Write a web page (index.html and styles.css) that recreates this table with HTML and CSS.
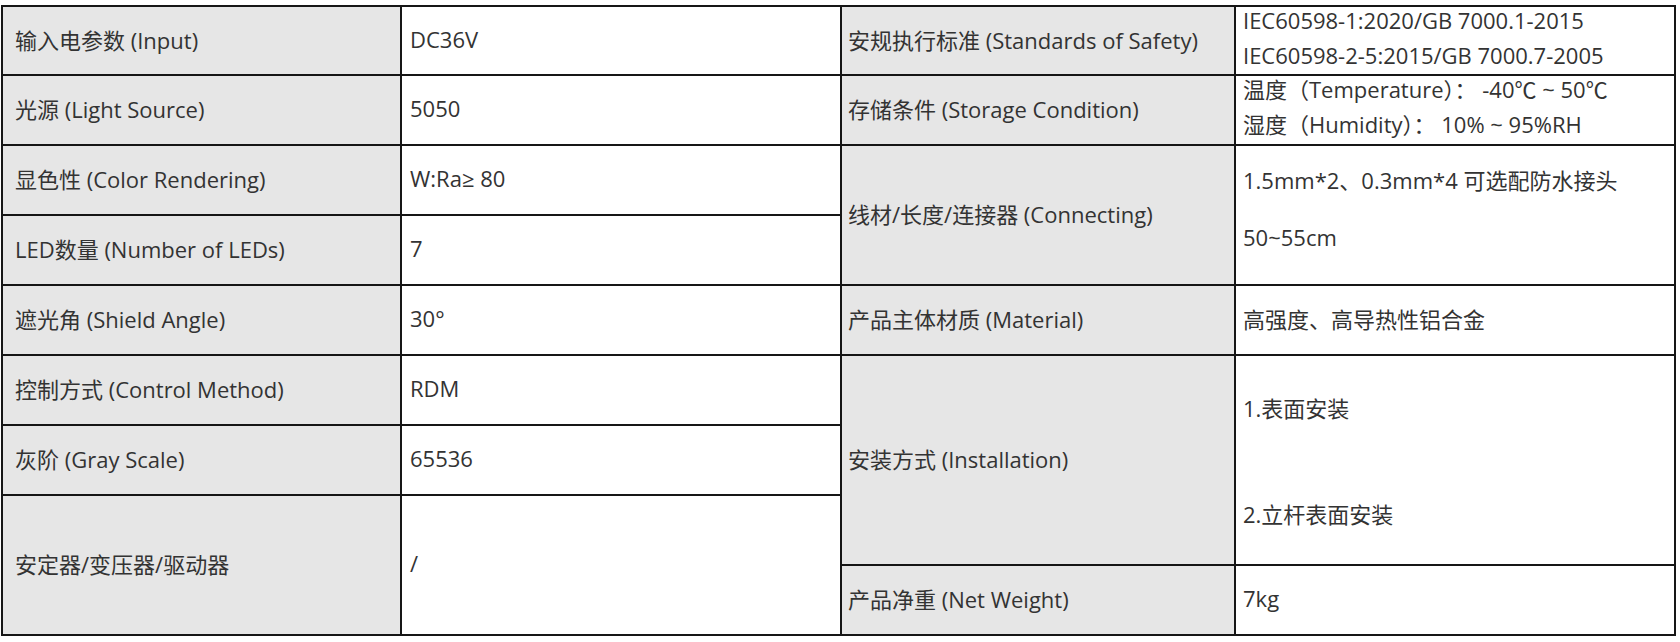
FILE: index.html
```html
<!DOCTYPE html>
<html lang="zh-CN">
<head>
<meta charset="utf-8">
<title>产品参数</title>
<link rel="stylesheet" href="styles.css">
</head>
<body>
<div class="spec">
  <div class="cell label c1">输入电参数 (Input)</div>
  <div class="cell value c2">DC36V</div>
  <div class="cell label c3">安规执行标准 (Standards of Safety)</div>
  <div class="cell value c4 lines"><span>IEC60598-1:2020/GB 7000.1-2015</span><span>IEC60598-2-5:2015/GB 7000.7-2005</span></div>

  <div class="cell label c1">光源 (Light Source)</div>
  <div class="cell value c2">5050</div>
  <div class="cell label c3">存储条件 (Storage Condition)</div>
  <div class="cell value c4 lines"><span>温度（Temperature）： -40℃ ~ 50℃</span><span>湿度（Humidity）： 10% ~ 95%RH</span></div>

  <div class="cell label c1">显色性 (Color Rendering)</div>
  <div class="cell value c2">W:Ra≥ 80</div>
  <div class="cell label c3 span2">线材/长度/连接器 (Connecting)</div>
  <div class="cell value c4 span2 paras connect"><span>1.5mm*2、0.3mm*4 可选配防水接头</span><span>50~55cm</span></div>

  <div class="cell label c1">LED数量 (Number of LEDs)</div>
  <div class="cell value c2">7</div>

  <div class="cell label c1">遮光角 (Shield Angle)</div>
  <div class="cell value c2">30°</div>
  <div class="cell label c3">产品主体材质 (Material)</div>
  <div class="cell value c4">高强度、高导热性铝合金</div>

  <div class="cell label c1">控制方式 (Control Method)</div>
  <div class="cell value c2">RDM</div>
  <div class="cell label c3 span3">安装方式 (Installation)</div>
  <div class="cell value c4 span3 paras install"><span>1.表面安装</span><span>2.立杆表面安装</span></div>

  <div class="cell label c1">灰阶 (Gray Scale)</div>
  <div class="cell value c2">65536</div>

  <div class="cell label c1 span2">安定器/变压器/驱动器</div>
  <div class="cell value c2 span2">/</div>

  <div class="cell label c3">产品净重 (Net Weight)</div>
  <div class="cell value c4">7kg</div>
</div>
</body>
</html>
```

FILE: styles.css
```css
html, body {
  margin: 0;
  padding: 0;
  background: #ffffff;
}

body {
  font-family: "Open Sans", "Noto Sans CJK SC", sans-serif;
  font-size: 22px;
  color: #333333;
}

.spec {
  display: grid;
  grid-template-columns: 399px 440px 394px 440px;
  grid-template-rows: 69px repeat(8, 70px);
  margin: 5px 0 0 1px;
  width: max-content;
  border-left: 2px solid #161616;
  border-top: 2px solid #161616;
}

.cell {
  box-sizing: border-box;
  display: flex;
  align-items: center;
  padding-bottom: 4px;
  border-right: 2px solid #161616;
  border-bottom: 2px solid #161616;
  white-space: nowrap;
}

.label {
  background: #e6e6e6;
}

.value {
  background: #ffffff;
}

.c1 { padding-left: 12px; }
.c2 { padding-left: 8px; }
.c3 { padding-left: 6px; }
.c4 { padding-left: 7px; }

.span2 { grid-row: span 2; }
.span3 { grid-row: span 3; }

.lines {
  flex-direction: column;
  align-items: flex-start;
  justify-content: center;
  line-height: 35px;
  padding-bottom: 6px;
}

.paras {
  flex-direction: column;
  align-items: flex-start;
  justify-content: center;
}

.connect {
  gap: 27px;
  padding-bottom: 15px;
}

.install {
  gap: 74px;
  padding-bottom: 1px;
}
```
